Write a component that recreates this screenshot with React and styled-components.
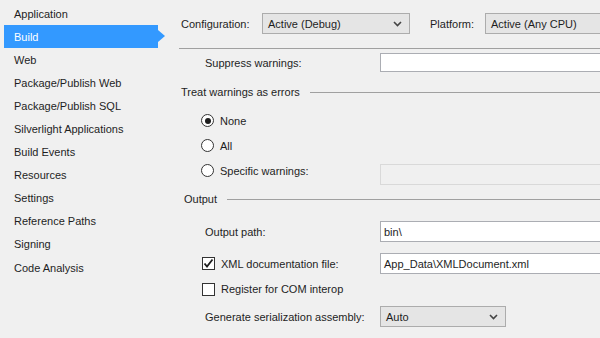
import React from "react";
import styled, { createGlobalStyle } from "styled-components";

const Global = createGlobalStyle`
  html, body { margin: 0; padding: 0; background: #f0f0f0; }
  body { font-family: "Liberation Sans", Arial, sans-serif; font-size: 11px; color: #1e1e1e; }
  * { box-sizing: border-box; }
`;

const Page = styled.div`
  width: 600px;
  height: 338px;
  overflow: hidden;
  display: flex;
  background: #f0f0f0;
`;

const Sidebar = styled.nav`
  width: 170px;
  flex: none;
  padding-top: 2px;
  display: flex;
  flex-direction: column;
`;

const NavItem = styled.div`
  position: relative;
  height: 23.1px;
  flex: none;
  margin-left: 4px;
  width: 154px;
  padding-left: 10px;
  display: flex;
  align-items: center;
  white-space: nowrap;
  color: ${(p) => (p.$active ? "#ffffff" : "#1e1e1e")};
  background: ${(p) => (p.$active ? "#3399ff" : "transparent")};
  &::after {
    content: "";
    display: ${(p) => (p.$active ? "block" : "none")};
    position: absolute;
    right: -7px;
    top: 5px;
    border-left: 7px solid #3399ff;
    border-top: 6.5px solid transparent;
    border-bottom: 6.5px solid transparent;
  }
`;

const Main = styled.main`
  flex: 1;
  min-width: 0;
  padding-left: 9px;
  display: flex;
  flex-direction: column;
`;

const TopBar = styled.div`
  margin-top: 13px;
  height: 21px;
  display: flex;
  align-items: center;
  padding-left: 2px;
`;

const TopLabel = styled.span`
  width: ${(p) => p.$w}px;
  flex: none;
  white-space: nowrap;
`;

const Select = styled.div`
  width: ${(p) => p.$w}px;
  flex: none;
  height: 21px;
  border: 1px solid #acacac;
  background: #e5e5e5;
  display: flex;
  align-items: center;
  justify-content: space-between;
  padding: 0 7px 0 5px;
  white-space: nowrap;
  margin-right: ${(p) => p.$mr || 0}px;
`;

const Separator = styled.div`
  margin-top: 14px;
  height: 1px;
  background: #a0a0a0;
`;

const Row = styled.div`
  display: flex;
  align-items: ${(p) => p.$align || "center"};
  height: ${(p) => p.$h}px;
  margin-top: ${(p) => p.$mt}px;
`;

const FieldLabel = styled.span`
  width: 201px;
  flex: none;
  padding-left: 26px;
  white-space: nowrap;
`;

const TextBox = styled.div`
  flex: 1;
  height: ${(p) => p.$h || 21}px;
  margin-top: ${(p) => p.$mt || 0}px;
  border: 1px solid ${(p) => (p.$disabled ? "#d9d9d9" : "#abadb3")};
  border-right: none;
  background: ${(p) => (p.$disabled ? "#f0f0f0" : "#ffffff")};
  display: flex;
  align-items: center;
  padding-left: 3px;
  white-space: nowrap;
`;

const GroupHeader = styled.div`
  display: flex;
  align-items: center;
  height: 16px;
  margin-top: ${(p) => p.$mt}px;
  padding-left: ${(p) => p.$pl || 2}px;
  gap: 10px;
  white-space: nowrap;
  &::after {
    content: "";
    flex: 1;
    height: 1px;
    background: #a0a0a0;
  }
`;

const OptionLabel = styled.label`
  display: flex;
  align-items: center;
  height: ${(p) => p.$h || 25}px;
  width: 201px;
  flex: none;
  padding-left: ${(p) => p.$pl}px;
  gap: 6px;
  white-space: nowrap;
`;

const RadioCircle = styled.span`
  width: 13px;
  height: 13px;
  border-radius: 50%;
  border: 1px solid #333333;
  background: #ffffff;
  display: flex;
  align-items: center;
  justify-content: center;
  flex: none;
  &::after {
    content: "";
    display: ${(p) => (p.$checked ? "block" : "none")};
    width: 6px;
    height: 6px;
    border-radius: 50%;
    background: #1e1e1e;
  }
`;

const CheckBox = styled.span`
  width: 13px;
  height: 13px;
  border: 1px solid #333333;
  background: #ffffff;
  display: flex;
  align-items: center;
  justify-content: center;
  flex: none;
`;

const Chevron = () => (
  <svg width="9" height="6" viewBox="0 0 9 6">
    <path d="M1 1 L4.5 4.5 L8 1" fill="none" stroke="#444" strokeWidth="1.6" />
  </svg>
);

const Check = () => (
  <svg width="11" height="11" viewBox="0 0 11 11">
    <path d="M1.5 5.5 L4 8.5 L9.5 1.5" fill="none" stroke="#1e1e1e" strokeWidth="1.8" />
  </svg>
);

const navItems = [
  "Application",
  "Build",
  "Web",
  "Package/Publish Web",
  "Package/Publish SQL",
  "Silverlight Applications",
  "Build Events",
  "Resources",
  "Settings",
  "Reference Paths",
  "Signing",
  "Code Analysis",
];

export default function App() {
  return (
    <>
      <Global />
      <Page>
        <Sidebar>
          {navItems.map((n) => (
            <NavItem key={n} $active={n === "Build"}>
              {n}
            </NavItem>
          ))}
        </Sidebar>
        <Main>
          <TopBar>
            <TopLabel $w={81}>Configuration:</TopLabel>
            <Select $w={148} $mr={20}>
              <span>Active (Debug)</span>
              <Chevron />
            </Select>
            <TopLabel $w={55}>Platform:</TopLabel>
            <Select $w={160}>
              <span>Active (Any CPU)</span>
            </Select>
          </TopBar>
          <Separator />
          <Row $h={19} $mt={4}>
            <FieldLabel>Suppress warnings:</FieldLabel>
            <TextBox $h={19} />
          </Row>
          <GroupHeader $mt={12}>Treat warnings as errors</GroupHeader>
          <Row $h={25} $mt={8}>
            <OptionLabel $pl={22}>
              <RadioCircle $checked />
              None
            </OptionLabel>
          </Row>
          <Row $h={25} $mt={0}>
            <OptionLabel $pl={22}>
              <RadioCircle />
              All
            </OptionLabel>
          </Row>
          <Row $h={29} $mt={0} $align="flex-start">
            <OptionLabel $pl={22}>
              <RadioCircle />
              Specific warnings:
            </OptionLabel>
            <TextBox $disabled $mt={6} />
          </Row>
          <GroupHeader $mt={4} $pl={5}>Output</GroupHeader>
          <Row $h={21} $mt={14}>
            <FieldLabel>Output path:</FieldLabel>
            <TextBox>bin\</TextBox>
          </Row>
          <Row $h={21} $mt={11}>
            <OptionLabel $pl={23} $h={21}>
              <CheckBox>
                <Check />
              </CheckBox>
              XML documentation file:
            </OptionLabel>
            <TextBox>App_Data\XMLDocument.xml</TextBox>
          </Row>
          <Row $h={20} $mt={5}>
            <OptionLabel $pl={23} $h={20}>
              <CheckBox />
              Register for COM interop
            </OptionLabel>
          </Row>
          <Row $h={21} $mt={7}>
            <FieldLabel>Generate serialization assembly:</FieldLabel>
            <Select $w={126}>
              <span>Auto</span>
              <Chevron />
            </Select>
          </Row>
        </Main>
      </Page>
    </>
  );
}
